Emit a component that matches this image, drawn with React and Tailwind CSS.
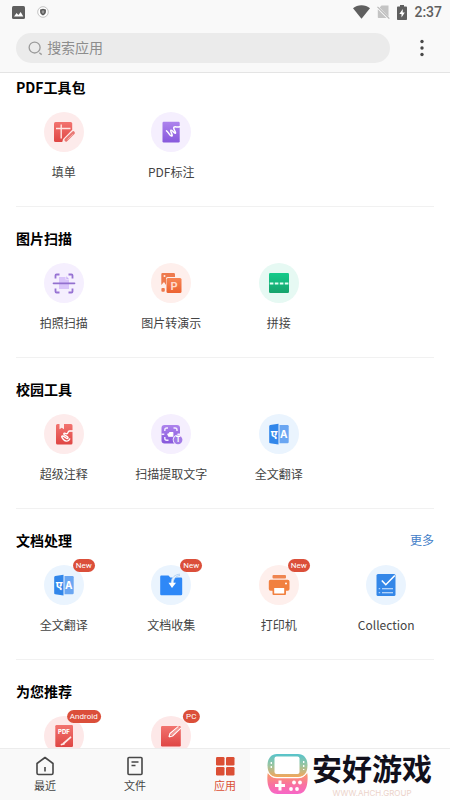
// Status bar
const StatusBar = () => (
    <div className="flex h-6 items-center justify-between pr-2 pl-3 text-[#5f5f5f]">
        <div className="flex items-center gap-3">
            <svg viewBox="0 0 13 13" className="size-[13px]">
                <rect width="13" height="13" rx="1.5" fill="currentColor" />
                <path d="M2 10.5 4.6 7l1.8 2.1L8.7 6l2.6 4.5z" fill="#fff" />
            </svg>
            <svg viewBox="0 0 12 12" className="size-3">
                <circle cx="6" cy="6" r="5.3" fill="#fff" stroke="#b5b5b5" strokeWidth=".8" />
                <path d="M6 2.7 8.9 3.6v2.2C8.9 7.7 7.7 8.8 6 9.5 4.3 8.8 3.1 7.7 3.1 5.8V3.6z" fill="#5a5a5a" />
                <path d="M6 4.3 7.3 4.8v1.1C7.3 6.8 6.8 7.3 6 7.7 5.2 7.3 4.7 6.8 4.7 5.9V4.8z" fill="#999" />
            </svg>
        </div>
        <div className="flex items-center gap-[7px]">
            <svg viewBox="0 0 17 14" className="h-[14px] w-[17px]">
                <path d="M8.5 13.8 0 3.3C2.3 1.3 5.2.2 8.5.2s6.2 1.1 8.5 3.1z" fill="currentColor" />
            </svg>
            <svg viewBox="0 0 13 14" className="h-[14px] w-[13px]">
                <path d="M4.5.5h7v11.2L2.6 2.5zM.8 4.2 9.5 13H1.5a.7.7 0 0 1-.7-.7z" fill="#c4c4c4" />
                <path d="M.5 1.8 12.3 13.6" stroke="#b5b5b5" strokeWidth="1.1" />
            </svg>
            <svg viewBox="0 0 10 15" className="h-[15px] w-[10px]">
                <path d="M3 0h4v1.6h2.2a.8.8 0 0 1 .8.8v11.8a.8.8 0 0 1-.8.8H.8a.8.8 0 0 1-.8-.8V2.4a.8.8 0 0 1 .8-.8H3z" fill="currentColor" />
                <path d="M5.8 4 2.3 9h2.2v3.600L7.800 7.500H5.700z" fill="#fff" />
            </svg>
            <span className="font-['Roboto',sans-serif] text-sm leading-6 font-medium">2:37</span>
        </div>
    </div>
);

// App glyphs, all drawn on a 24px box
const FormIcon = () => (
    <svg viewBox="0 0 24 24" className="size-6">
        <defs>
            <linearGradient id="red" x2="0" y2="1">
                <stop stopColor="#f2736f" />
                <stop offset="1" stopColor="#df4644" />
            </linearGradient>
        </defs>
        <path d="M3.500 2h15.200a1.500 1.500 0 0 1 1.500 1.500V10L10 22H3.500A1.500 1.500 0 0 1 2 20.500v-17A1.500 1.500 0 0 1 3.500 2z" fill="url(#red)" />
        <path d="M4 8.500h14.500M9.200 4.500V18.500" stroke="#ffe6e4" strokeWidth="1.400" />
        <path d="M13.500 20.500 21.500 12.500" stroke="#fdebeb" strokeWidth="5.400" strokeLinecap="round" />
        <path d="M14 20 21.300 12.800" stroke="#e97773" strokeWidth="3.200" strokeLinecap="round" />
        <path d="m15.500 19.500 5.500-5.300" stroke="#f8b9b5" strokeWidth=".8" />
    </svg>
);

const MarkIcon = () => (
    <svg viewBox="0 0 24 24" className="size-6">
        <defs>
            <linearGradient id="purple" x2="0" y2="1">
                <stop stopColor="#ad83ed" />
                <stop offset="1" stopColor="#8758dc" />
            </linearGradient>
        </defs>
        <rect x="3.500" y="1.800" width="17.200" height="20.700" rx="1.200" fill="url(#purple)" />
        <path d="M7.500 10.800c2 1 2.800 4.900 5 5.100s-1.800-5-.5-5.700 3 3.500 4.300 3-2.800-4.800-1.300-6 3 .8 5.700-.5" fill="none" stroke="#fff" strokeWidth="1.500" strokeLinecap="round" strokeLinejoin="round" />
    </svg>
);

const CameraScanIcon = () => (
    <svg viewBox="0 0 24 24" className="size-6">
        <path d="M7 6h6.500v2.500H17V18H7z" fill="#d9c4fa" />
        <path d="M14.300 5.300 17 8h-2.700z" fill="#c9aff5" />
        <path d="M3.500 7.500v-3a1 1 0 0 1 1-1h3M16.500 3.500h3a1 1 0 0 1 1 1v3M20.500 17.500v3a1 1 0 0 1-1 1h-3M7.500 21.500h-3a1 1 0 0 1-1-1v-3" fill="none" stroke="#9773d3" strokeWidth="1.800" />
        <path d="M1.500 12.300h21" stroke="#9370cf" strokeWidth="1.700" strokeLinecap="round" />
    </svg>
);

const SlidesIcon = () => (
    <svg viewBox="0 0 24 24" className="size-6">
        <defs>
            <linearGradient id="orange" x2="0" y2="1">
                <stop stopColor="#f78554" />
                <stop offset="1" stopColor="#ec6231" />
            </linearGradient>
        </defs>
        <path d="M3.500 2h11.300a1.200 1.200 0 0 1 1.200 1.200V6H8.500A1.500 1.500 0 0 0 7 7.500V14l-2-3-2.700 3V3.200A1.200 1.200 0 0 1 3.500 2z" fill="#ee7a4e" />
        <circle cx="5.500" cy="5" r="1" fill="#fdece6" />
        <rect x="2.400" y="17" width="3.400" height="3.800" rx="1" fill="#ee7a4e" />
        <rect x="7.500" y="7" width="15" height="15" rx="1.500" fill="url(#orange)" />
        <text x="15" y="18.500" textAnchor="middle" fontSize="11" fontWeight="700" fontFamily="Inter, sans-serif" fill="#ffd9c9">P</text>
    </svg>
);

const JoinIcon = () => (
    <svg viewBox="0 0 24 24" className="size-6">
        <defs>
            <linearGradient id="green" x2="0" y2="1">
                <stop stopColor="#14cb8b" />
                <stop offset="1" stopColor="#16a36c" />
            </linearGradient>
        </defs>
        <rect x="2" y="2" width="20" height="20" rx="1.200" fill="url(#green)" />
        <path d="M2.800 12.500H22" stroke="#e4fff4" strokeWidth="2" strokeDasharray="3.600 1.400" />
    </svg>
);

const SuperNoteIcon = () => (
    <svg viewBox="0 0 24 24" className="size-6">
        <path d="M5.500 2h13.500a1.500 1.500 0 0 1 1.500 1.500V21a1.500 1.500 0 0 1-1.500 1.500H5.500A1.500 1.500 0 0 1 4 21V3.500A1.500 1.500 0 0 1 5.500 2z" fill="url(#red)" />
        <path d="M7.500 2h4.500v5.300L9.700 5.800 7.500 7.300z" fill="#fdebeb" />
        <path d="M20.500 9h-3c-2 0-1 2.500-2.500 2.700s-3.200-1.500-3.200.3 5 2.200 4.200 4-4-2-5.500-2-.500 2 1.200 3.800 5 2 6-.8" fill="none" stroke="#fff" strokeWidth="1.400" strokeLinecap="round" strokeLinejoin="round" />
    </svg>
);

const ExtractIcon = () => (
    <svg viewBox="0 0 24 24" className="size-6">
        <rect x="2.500" y="3" width="18.500" height="18.500" rx="3" fill="url(#purple)" />
        <path d="M5.800 9V8A2 2 0 0 1 7.800 6H9M14.500 6H16a2 2 0 0 1 2 2v1M5.800 15v1.200a2 2 0 0 0 2 2H9.500M2.500 12.200h2.800M18.500 12.200H21" fill="none" stroke="#f4ecff" strokeWidth="1.400" />
        <path d="M8.800 12.200h1l1-1.500h3v3.500h-4z" fill="#fff" stroke="#fff" strokeWidth="1.200" strokeLinejoin="round" />
        <circle cx="19" cy="17.800" r="5.300" fill="#f5effe" />
        <circle cx="19" cy="17.800" r="4.400" fill="#a27be6" />
        <text x="19" y="20.300" textAnchor="middle" fontSize="7" fontWeight="700" fontFamily="Inter, sans-serif" fill="#fff">T</text>
    </svg>
);

const TranslateIcon = () => (
    <svg viewBox="0 0 24 24" className="size-6">
        <path d="M12.500 3H20.500A1.200 1.200 0 0 1 21.700 4.200V20a1.200 1.200 0 0 1-1.200 1.200h-8z" fill="#6aa6f2" />
        <path d="M3.200 3 11.500 1.800V22.400L3.200 21.300A1.200 1.200 0 0 1 2.200 20V4.200A1.200 1.200 0 0 1 3.200 3z" fill="#3186ea" />
        <text x="7" y="15.500" textAnchor="middle" fontSize="11" fontWeight="700" fontFamily="'Noto Sans Devanagari', 'Noto Sans', sans-serif" fill="#fff">ए</text>
        <text x="16.800" y="15.500" textAnchor="middle" fontSize="10" fontWeight="700" fontFamily="Inter, sans-serif" fill="#fff">A</text>
    </svg>
);

const CollectIcon = () => (
    <svg viewBox="0 0 24 24" className="size-6">
        <path d="M2.500 2.500h7l1.800 2H22A1.200 1.200 0 0 1 23.200 5.700V21A1.200 1.200 0 0 1 22 22.200H2.500A1.200 1.200 0 0 1 1.200 21V3.700A1.200 1.200 0 0 1 2.500 2.500z" fill="#2e88f7" />
        <path d="M21 1.800c-4 0-7.800 2.500-7.800 8.500" fill="none" stroke="#eaf4fe" strokeWidth="2.600" />
        <path d="M21 1.200c-4.500.2-9 3-8.800 9M21 2.500c-4 .5-6.500 3-6.500 7" fill="none" stroke="#7fb0e6" strokeWidth=".5" />
        <path d="M9.500 9.800H17L13 15z" fill="#fff" />
    </svg>
);

const PrinterIcon = () => (
    <svg viewBox="0 0 24 24" className="size-6">
        <rect x="5.500" y="2" width="13.500" height="3.600" rx="1" fill="#ef8550" />
        <path d="M3.500 6.800h17.300a1.700 1.700 0 0 1 1.700 1.700v7.500a1.700 1.700 0 0 1-1.700 1.700H19V21a1 1 0 0 1-1 1H6.500a1 1 0 0 1-1-1v-3.300h-2A1.700 1.700 0 0 1 1.800 16V8.500a1.700 1.700 0 0 1 1.700-1.700z" fill="#f1803f" />
        <rect x="7.200" y="15" width="10" height="5.500" fill="#fff" />
        <circle cx="19" cy="10.500" r="1" fill="#fff" />
    </svg>
);

const CollectionIcon = () => (
    <svg viewBox="0 0 24 24" className="size-6">
        <rect x="2.500" y="1" width="19" height="22" rx="1.500" fill="#3487e8" />
        <path d="m7.800 7.500 4 4.200L20.800 2.500" fill="none" stroke="#fff" strokeWidth="1.600" />
        <path d="M8 15.700h11M8 19.700h11" stroke="#d9ecff" strokeWidth="1.100" />
        <path d="M4.700 15.700h1.500M4.700 19.700h1.500" stroke="#a9d0fa" strokeWidth="1.200" />
    </svg>
);

const PdfEditIcon = () => (
    <svg viewBox="0 0 24 24" className="size-6">
        <rect x="3.300" y="1" width="17.700" height="22" rx="1.200" fill="url(#red)" />
        <text x="12" y="9.500" textAnchor="middle" fontSize="6" fontWeight="800" fontFamily="Inter, sans-serif" fill="#fff">PDF</text>
        <path d="m11.500 19.500 7-6.200M9.500 20.500l2.500-.7" stroke="#ffe9e7" strokeWidth="1.800" strokeLinecap="round" />
    </svg>
);

const EditIcon = () => (
    <svg viewBox="0 0 24 24" className="size-6">
        <rect x="2" y="2" width="19.800" height="20.500" rx="1.200" fill="url(#red)" />
        <path d="m10 13 1-3.500L19.500 2.500M10 13l3.500-1L21.800 4" fill="none" stroke="#fff" strokeWidth="1.300" strokeLinejoin="round" />
        <path d="m12 11 8.500-7.800" stroke="#f39a96" strokeWidth="2" />
    </svg>
);

const sections = [
    {
        title: "PDF工具包",
        apps: [
            { name: "填单", icon: FormIcon, bg: "bg-[#fdebeb]" },
            { name: "PDF标注", icon: MarkIcon, bg: "bg-[#f5effe]" },
        ],
    },
    {
        title: "图片扫描",
        apps: [
            { name: "拍照扫描", icon: CameraScanIcon, bg: "bg-[#f5effe]" },
            { name: "图片转演示", icon: SlidesIcon, bg: "bg-[#feefec]" },
            { name: "拼接", icon: JoinIcon, bg: "bg-[#e6f9f3]" },
        ],
    },
    {
        title: "校园工具",
        apps: [
            { name: "超级注释", icon: SuperNoteIcon, bg: "bg-[#fdebeb]" },
            { name: "扫描提取文字", icon: ExtractIcon, bg: "bg-[#f5effe]" },
            { name: "全文翻译", icon: TranslateIcon, bg: "bg-[#eaf4fe]" },
        ],
    },
    {
        title: "文档处理",
        more: true,
        apps: [
            { name: "全文翻译", icon: TranslateIcon, bg: "bg-[#eaf4fe]", badge: "New" },
            { name: "文档收集", icon: CollectIcon, bg: "bg-[#eaf4fe]", badge: "New" },
            { name: "打印机", icon: PrinterIcon, bg: "bg-[#feefec]", badge: "New" },
            { name: "Collection", icon: CollectionIcon, bg: "bg-[#eaf4fe]" },
        ],
    },
    {
        title: "为您推荐",
        apps: [
            { icon: PdfEditIcon, bg: "bg-[#fde8e8]", badge: "Android" },
            { icon: EditIcon, bg: "bg-[#fde8e8]", badge: "PC" },
        ],
    },
];

const AppItem = ({ app }) => {
    const Icon = app.icon;
    return (
        <button type="button" className="flex flex-col items-center gap-[10px]">
            <span className={`relative flex size-10 items-center justify-center rounded-full ${app.bg}`}>
                <Icon />
                {app.badge && (
                    <span className="absolute -top-[6px] left-full flex h-[13px] -translate-x-1/2 items-center rounded-full bg-[#db4f3a] px-[3px] font-['Roboto',sans-serif] text-[8px] text-white">
                        {app.badge}
                    </span>
                )}
            </span>
            {app.name && <span className="text-xs leading-5 text-[#444]">{app.name}</span>}
        </button>
    );
};

const Section = ({ section }) => (
    <section className="pt-4">
        <div className="flex h-[30px] items-center justify-between px-4">
            <h2 className="text-sm font-bold text-black">{section.title}</h2>
            {section.more && <a href="#more" className="text-xs text-[#4380c8]">更多</a>}
        </div>
        <div className="grid grid-cols-4 px-[10px] pt-[10px] pb-6">
            {section.apps.map((app, index) => (
                <AppItem key={index} app={app} />
            ))}
        </div>
        <div className="mx-4 h-px bg-[#f1f1f1]" />
    </section>
);

const tabs = [
    {
        name: "最近",
        icon: (
            <svg viewBox="0 0 20 20" className="size-5" fill="none" stroke="#484848" strokeWidth="1.600">
                <path d="M2 7.500 10 1.500l8 6V17a1.500 1.500 0 0 1-1.500 1.500h-13A1.500 1.500 0 0 1 2 17zM10 11v4.500" strokeLinejoin="round" />
            </svg>
        ),
    },
    {
        name: "文件",
        icon: (
            <svg viewBox="0 0 20 20" className="size-5" fill="none" stroke="#484848" strokeWidth="1.600">
                <rect x="3" y="1.500" width="14" height="17" rx="1" />
                <path d="M6.500 6h7M6.500 9.500h4" />
            </svg>
        ),
    },
    {
        name: "应用",
        active: true,
        icon: (
            <svg viewBox="0 0 20 20" className="size-5" fill="#db4f35">
                <rect x="1" y="1" width="8.500" height="8.500" rx="1.200" />
                <rect x="11" y="1" width="8.500" height="8.500" rx="1.200" />
                <rect x="1" y="11" width="8.500" height="8.500" rx="1.200" />
                <rect x="11" y="11" width="8.500" height="8.500" rx="1.200" />
            </svg>
        ),
    },
];

// Handheld console logo with the site name
const Brand = () => (
    <div className="absolute right-0 bottom-0 flex h-[51px] w-[200px] items-start gap-1 bg-[#fefefe] pt-1 pl-[17px]">
        <svg viewBox="0 0 41 42" className="h-[42px] w-[41px]">
            <defs>
                <linearGradient id="top" x2="0" y2="1">
                    <stop stopColor="#55c3cb" />
                    <stop offset=".5" stopColor="#9cc5a0" />
                    <stop offset="1" stopColor="#f3a65a" />
                </linearGradient>
                <linearGradient id="bottom" x2="0" y2="1">
                    <stop stopColor="#f8a062" />
                    <stop offset=".55" stopColor="#f9739f" />
                    <stop offset="1" stopColor="#f765c8" />
                </linearGradient>
            </defs>
            <path d="M10 1h21c6 0 9.500 4.500 9.500 11.500S37 24 31 24H10C4 24 .5 19.500.5 12.500S4 1 10 1z" fill="url(#top)" />
            <rect x="7.500" y="3.500" width="25" height="17.500" rx="2" fill="#fff" />
            <path d="M4.300 9v2M4.300 13v2M36.700 8v2M36.700 12v2M36.700 16v1" stroke="#fff" strokeWidth="1.300" />
            <path d="M1 19.500c1.800 3.500 5 5.500 9 5.500h21c4 0 7.200-2 9-5.500 1 3 .8 9.500-.3 13.500-1.300 5-4.500 8-9.200 8h-20C5.800 41 2.600 38 1.300 33 .2 29 0 22.500 1 19.500z" fill="url(#bottom)" />
            <path d="M1 19.500c1.800 3.500 5 5.300 9 5.300h21c4 0 7.200-1.800 9-5.300" fill="none" stroke="#fff" strokeWidth=".9" />
            <path d="M13 27.500v10M8 32.500h10" stroke="#fff" strokeWidth="3" />
            <g fill="#fff">
                <circle cx="27" cy="29.500" r="1.900" />
                <circle cx="33" cy="29.500" r="1.900" />
                <circle cx="24" cy="36" r="1.900" />
                <circle cx="30" cy="36" r="1.900" />
            </g>
        </svg>
        <div className="flex flex-col items-center gap-2">
            <span className="text-3xl leading-7 font-bold text-[#11101c]">安好游戏</span>
            <span className="font-['Inter',sans-serif] text-[8px] leading-2 text-[#ecd3ca]">WWW.AHCH.GROUP</span>
        </div>
    </div>
);

const App = () => {
    return (
        <div className="flex h-screen flex-col overflow-hidden bg-white font-['Noto_Sans_CJK_SC',sans-serif]">
            {/* Header */}
            <header className="border-b border-[#e4e4e4] bg-[#f9f9f9] pb-[9px]">
                <StatusBar />
                <div className="flex items-center gap-5 pt-[9px] pr-4 pl-4">
                    <label className="flex h-[30px] flex-1 items-center gap-1 rounded-full bg-[#ebebeb] px-3">
                        <svg viewBox="0 0 16 16" className="size-4" fill="none" stroke="#9b9b9b" strokeWidth="1.400">
                            <circle cx="7" cy="7.500" r="5.800" />
                            <path d="m12 13 2.500 2" />
                        </svg>
                        <input
                            type="search"
                            aria-label="搜索应用"
                            placeholder="搜索应用"
                            className="w-full bg-transparent pb-0.5 text-sm text-[#444] outline-none placeholder:text-[#8d8d8d]"
                        />
                    </label>
                    <button type="button" aria-label="菜单" className="flex h-6 w-6 items-center justify-center">
                        <svg viewBox="0 0 4 18" className="h-[18px] w-1" fill="#484848">
                            <circle cx="2" cy="2.500" r="1.700" />
                            <circle cx="2" cy="9" r="1.700" />
                            <circle cx="2" cy="15.500" r="1.700" />
                        </svg>
                    </button>
                </div>
            </header>

            {/* App list, scrolled a little */}
            <main className="min-h-0 flex-1 overflow-hidden">
                <div className="-mt-[17px]">
                    {sections.map((section) => (
                        <Section key={section.title} section={section} />
                    ))}
                </div>
            </main>

            {/* Bottom tabs */}
            <nav className="relative grid grid-cols-5 border-t border-[#ececec] bg-[#f9f9f9]">
                {tabs.map((tab) => (
                    <button key={tab.name} type="button" className="flex flex-col items-center pt-[7px] pb-[6px]">
                        {tab.icon}
                        <span className={tab.active ? "text-[11px] leading-[18px] text-[#db4f35]" : "text-[11px] leading-[18px] text-[#444]"}>
                            {tab.name}
                        </span>
                    </button>
                ))}
                <Brand />
            </nav>
        </div>
    );
};

export default App;
